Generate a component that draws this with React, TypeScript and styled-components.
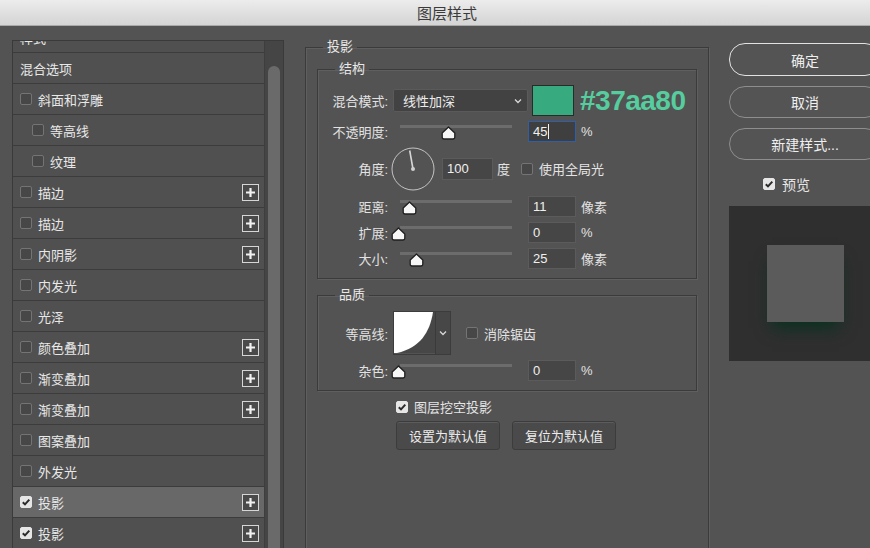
import React from "react"
import styled, { createGlobalStyle } from "styled-components"

const GlobalStyle = createGlobalStyle`
  html, body {
    margin: 0;
    padding: 0;
    background: #535353;
  }
  body {
    font-family: "Liberation Sans", "Noto Sans CJK SC", sans-serif;
    color: #e4e4e4;
  }
`

type StyleItem = {
  label: string
  check?: boolean
  checked?: boolean
  indent?: boolean
  plus?: boolean
  active?: boolean
  clipped?: boolean
}

const styleItems: StyleItem[] = [
  { label: "样式", clipped: true },
  { label: "混合选项" },
  { label: "斜面和浮雕", check: true },
  { label: "等高线", check: true, indent: true },
  { label: "纹理", check: true, indent: true },
  { label: "描边", check: true, plus: true },
  { label: "描边", check: true, plus: true },
  { label: "内阴影", check: true, plus: true },
  { label: "内发光", check: true },
  { label: "光泽", check: true },
  { label: "颜色叠加", check: true, plus: true },
  { label: "渐变叠加", check: true, plus: true },
  { label: "渐变叠加", check: true, plus: true },
  { label: "图案叠加", check: true },
  { label: "外发光", check: true },
  { label: "投影", check: true, checked: true, plus: true, active: true },
  { label: "投影", check: true, checked: true, plus: true },
]

const Check = ({ checked }: { checked?: boolean }) => (
  <CheckBox $checked={checked}>
    {checked && (
      <svg width="10" height="10" viewBox="0 0 10 10">
        <path d="M1.8 5.2 L4 7.4 L8.3 2.6" fill="none" stroke="#2b2b2b" strokeWidth="2" />
      </svg>
    )}
  </CheckBox>
)

const PlusIcon = () => (
  <PlusBox>
    <svg width="11" height="11" viewBox="0 0 11 11">
      <path d="M5.5 1 V10 M1 5.5 H10" stroke="#f0f0f0" strokeWidth="2.2" />
    </svg>
  </PlusBox>
)

const Chevron = () => (
  <svg width="8" height="6" viewBox="0 0 8 6">
    <path d="M1 1.5 L4 4.5 L7 1.5" fill="none" stroke="#d8d8d8" strokeWidth="1.3" />
  </svg>
)

const Slider = ({ value }: { value: number }) => (
  <SliderBox>
    <Track />
    <Thumb style={{ left: `${value * 112 - 9}px` }}>
      <svg width="15" height="14" viewBox="0 0 15 14">
        <path
          d="M7.5 1 L13.8 7 L13.8 11.3 Q13.8 13 12 13 L3 13 Q1.2 13 1.2 11.3 L1.2 7 Z"
          fill="#f7f7f7"
          stroke="#1f1f1f"
          strokeWidth="1.3"
          strokeLinejoin="round"
        />
      </svg>
    </Thumb>
  </SliderBox>
)

const Dial = () => (
  <DialBox>
    <svg width="44" height="44" viewBox="0 0 44 44">
      <circle cx="22" cy="22" r="21" fill="none" stroke="#c4c4c4" strokeWidth="1" />
      <line x1="22" y1="22" x2="18.7" y2="3.5" stroke="#d6d6d6" strokeWidth="1.6" />
      <circle cx="22" cy="22" r="2" fill="#d0d0d0" />
    </svg>
  </DialBox>
)

const App = () => {
  return (
    <Window>
      <GlobalStyle />
      <TitleBar>图层样式</TitleBar>
      <Body>
        <StylePanel>
          <StyleList>
            {styleItems.map((item, i) => (
              <StyleRow key={i} $indent={item.indent} $active={item.active} $clipped={item.clipped}>
                {item.check && <Check checked={item.checked} />}
                <span>{item.label}</span>
                {item.plus && <PlusIcon />}
              </StyleRow>
            ))}
          </StyleList>
          <ScrollTrack>
            <ScrollThumb />
          </ScrollTrack>
        </StylePanel>

        <Middle>
          <Group $outer>
            <Legend $indent={6}>投影</Legend>
            <Group>
              <Legend $indent={7}>结构</Legend>
              <GroupBody>
                <FieldRow $h={29}>
                  <Label>混合模式:</Label>
                  <Select>
                    <span>线性加深</span>
                    <Chevron />
                  </Select>
                  <Swatch />
                  <HexText>#37aa80</HexText>
                </FieldRow>
                <FieldRow $h={20}>
                  <Label>不透明度:</Label>
                  <Slider value={0.45} />
                  <NumInput $focus>
                    45
                    <Caret />
                  </NumInput>
                  <Unit>%</Unit>
                </FieldRow>
                <FieldRow $h={43}>
                  <Label>角度:</Label>
                  <Dial />
                  <NumInput $wide>100</NumInput>
                  <Unit $gap={4}>度</Unit>
                  <CheckLabel $gap={11}>
                    <Check />
                    使用全局光
                  </CheckLabel>
                </FieldRow>
                <FieldRow $h={20}>
                  <Label>距离:</Label>
                  <Slider value={0.1} />
                  <NumInput>11</NumInput>
                  <Unit>像素</Unit>
                </FieldRow>
                <FieldRow $h={20}>
                  <Label>扩展:</Label>
                  <Slider value={0} />
                  <NumInput>0</NumInput>
                  <Unit>%</Unit>
                </FieldRow>
                <FieldRow $h={20}>
                  <Label>大小:</Label>
                  <Slider value={0.16} />
                  <NumInput>25</NumInput>
                  <Unit>像素</Unit>
                </FieldRow>
              </GroupBody>
            </Group>

            <Group $spaced>
              <Legend $indent={7}>品质</Legend>
              <GroupBody $top={8}>
                <FieldRow $h={42}>
                  <Label>等高线:</Label>
                  <ContourPicker>
                    <ContourPreview>
                      <svg width="41" height="41" viewBox="0 0 41 41">
                        <rect width="41" height="41" fill="#474747" />
                        <path d="M0 41 L0 0 L39 0 C36 20 26 36 3 41 Z" fill="#ffffff" />
                      </svg>
                    </ContourPreview>
                    <ContourArrow>
                      <Chevron />
                    </ContourArrow>
                  </ContourPicker>
                  <CheckLabel $gap={15}>
                    <Check />
                    消除锯齿
                  </CheckLabel>
                </FieldRow>
                <FieldRow $h={20}>
                  <Label>杂色:</Label>
                  <Slider value={0} />
                  <NumInput>0</NumInput>
                  <Unit>%</Unit>
                </FieldRow>
              </GroupBody>
            </Group>

            <Actions>
              <CheckLabel $gap={0}>
                <Check checked />
                图层挖空投影
              </CheckLabel>
              <ButtonRow>
                <FlatButton>设置为默认值</FlatButton>
                <FlatButton>复位为默认值</FlatButton>
              </ButtonRow>
            </Actions>
          </Group>
        </Middle>

        <Side>
          <PillButton $primary>确定</PillButton>
          <PillButton>取消</PillButton>
          <PillButton>新建样式...</PillButton>
          <PreviewToggle>
            <Check checked />
            预览
          </PreviewToggle>
          <PreviewBox>
            <PreviewSquare />
          </PreviewBox>
        </Side>
      </Body>
    </Window>
  )
}

const Window = styled.div`
  width: 870px;
  height: 548px;
  overflow: hidden;
  display: flex;
  flex-direction: column;
  background: #535353;
`

const TitleBar = styled.div`
  flex: none;
  height: 26px;
  box-sizing: border-box;
  display: flex;
  align-items: center;
  justify-content: center;
  padding-left: 24px;
  background: linear-gradient(#ececec, #d4d4d4);
  border-bottom: 1px solid #a9a9a9;
  color: #3b3b3b;
  font-size: 15px;
`

const Body = styled.div`
  flex: 1;
  min-height: 0;
  display: flex;
  align-items: flex-start;
  padding: 14px 0 0 12px;
  overflow: hidden;
`

const StylePanel = styled.div`
  flex: none;
  width: 272px;
  height: 520px;
  box-sizing: border-box;
  display: flex;
  border: 1px solid #3a3a3a;
  border-bottom: none;
  background: #4f4f4f;
`

const StyleList = styled.div`
  flex: 1;
  overflow: hidden;
  display: flex;
  flex-direction: column;
`

const StyleRow = styled.div<{ $indent?: boolean; $active?: boolean; $clipped?: boolean }>`
  flex: none;
  height: 31px;
  box-sizing: border-box;
  display: flex;
  align-items: center;
  gap: 6px;
  padding: 0 5px 0 ${(p) => (p.$indent ? 19 : 7)}px;
  margin-top: ${(p) => (p.$clipped ? "-19px" : "0")};
  border-bottom: 1px solid #3c3c3c;
  background: ${(p) => (p.$active ? "#686868" : "#505050")};
  font-size: 13px;
  color: #e8e8e8;
`

const CheckBox = styled.span<{ $checked?: boolean }>`
  flex: none;
  width: 12px;
  height: 12px;
  box-sizing: border-box;
  border-radius: 2px;
  display: inline-flex;
  align-items: center;
  justify-content: center;
  border: 1px solid ${(p) => (p.$checked ? "#e6e6e6" : "#747474")};
  background: ${(p) => (p.$checked ? "#e6e6e6" : "#474747")};
`

const PlusBox = styled.span`
  flex: none;
  margin-left: auto;
  width: 17px;
  height: 17px;
  box-sizing: border-box;
  border: 1.5px solid #d6d6d6;
  display: flex;
  align-items: center;
  justify-content: center;
  background: #4a4a4a;
`

const ScrollTrack = styled.div`
  flex: none;
  width: 18px;
  display: flex;
  justify-content: center;
  padding-top: 25px;
  background: #454545;
  border-left: 1px solid #3e3e3e;
`

const ScrollThumb = styled.div`
  width: 12px;
  border-radius: 6px;
  background: #6a6a6a;
`

const Middle = styled.div`
  flex: none;
  width: 404px;
  margin: -2px 0 0 21px;
`

const Group = styled.fieldset<{ $outer?: boolean; $spaced?: boolean }>`
  margin: ${(p) => (p.$spaced ? "7px 0 0" : p.$outer ? "0" : "4px 0 0")};
  padding: 0 ${(p) => (p.$outer ? 11 : 10)}px;
  min-width: 0;
  min-height: ${(p) => (p.$outer ? "530px" : "0")};
  border: 1px solid #3b3b3b;
  box-shadow: inset 1px 1px 0 #5f5f5f, 1px 1px 0 #5f5f5f;
`

const Legend = styled.legend<{ $indent: number }>`
  margin-left: ${(p) => p.$indent}px;
  padding: 0 4px;
  font-size: 13px;
  line-height: 18px;
  color: #e8e8e8;
`

const GroupBody = styled.div<{ $top?: number }>`
  display: flex;
  flex-direction: column;
  gap: 6px;
  padding: ${(p) => p.$top ?? 8}px 0 10px;
`

const FieldRow = styled.div<{ $h: number }>`
  height: ${(p) => p.$h}px;
  display: flex;
  align-items: center;
  font-size: 13px;
  color: #e2e2e2;
`

const Label = styled.span`
  flex: none;
  width: 60px;
  text-align: right;
`

const Select = styled.div`
  flex: none;
  margin-left: 5px;
  width: 135px;
  height: 23px;
  box-sizing: border-box;
  display: flex;
  align-items: center;
  justify-content: space-between;
  padding: 0 5px 0 9px;
  background: #424242;
  border: 1px solid #5a5a5a;
  border-radius: 2px;
  color: #ececec;
`

const Swatch = styled.div`
  flex: none;
  margin-left: 4px;
  width: 42px;
  height: 31px;
  box-sizing: border-box;
  background: #37aa80;
  border: 1px solid #2a2a2a;
`

const HexText = styled.span`
  margin-left: 6px;
  font-family: "Liberation Sans", sans-serif;
  font-weight: bold;
  font-size: 28px;
  letter-spacing: -0.5px;
  color: #56cd9e;
`

const SliderBox = styled.div`
  flex: none;
  position: relative;
  margin-left: 12px;
  width: 112px;
  height: 20px;
`

const Track = styled.div`
  position: absolute;
  left: 0;
  right: 0;
  top: 4px;
  height: 3px;
  background: #6c6c6c;
`

const Thumb = styled.div`
  position: absolute;
  top: 5px;
  width: 15px;
  height: 14px;
  line-height: 0;
`

const NumInput = styled.div<{ $focus?: boolean; $wide?: boolean }>`
  flex: none;
  margin-left: ${(p) => (p.$wide ? 7 : 16)}px;
  width: ${(p) => (p.$wide ? 51 : 48)}px;
  height: ${(p) => (p.$wide ? 22 : 21)}px;
  box-sizing: border-box;
  display: flex;
  align-items: center;
  padding-left: 4px;
  background: ${(p) => (p.$focus ? "#3f3f3f" : "#464646")};
  border: 1px solid ${(p) => (p.$focus ? "#2f5fa8" : "#5b5b5b")};
  color: #f0f0f0;
  font-size: 13px;
`

const Caret = styled.span`
  width: 1px;
  height: 15px;
  margin-left: 1px;
  background: #f0f0f0;
`

const Unit = styled.span<{ $gap?: number }>`
  margin-left: ${(p) => p.$gap ?? 5}px;
`

const CheckLabel = styled.span<{ $gap: number }>`
  display: flex;
  align-items: center;
  gap: 6px;
  margin-left: ${(p) => p.$gap}px;
  font-size: 13px;
  color: #e4e4e4;
`

const DialBox = styled.div`
  flex: none;
  margin-left: 3px;
  width: 44px;
  height: 44px;
  line-height: 0;
`

const ContourPicker = styled.div`
  flex: none;
  margin-left: 5px;
  display: flex;
  height: 42px;
  border: 1px solid #3c3c3c;
`

const ContourPreview = styled.div`
  width: 41px;
  height: 41px;
  line-height: 0;
`

const ContourArrow = styled.div`
  width: 14px;
  display: flex;
  align-items: center;
  justify-content: center;
  background: #474747;
  border-left: 1px solid #3a3a3a;
`

const Actions = styled.div`
  display: flex;
  flex-direction: column;
  gap: 5px;
  padding: 6px 0 0 79px;
`

const ButtonRow = styled.div`
  display: flex;
  gap: 12px;
`

const FlatButton = styled.div`
  width: 104px;
  height: 29px;
  box-sizing: border-box;
  display: flex;
  align-items: center;
  justify-content: center;
  background: #4a4a4a;
  border: 1px solid #3c3c3c;
  border-radius: 3px;
  box-shadow: inset 0 1px 0 #5c5c5c;
  font-size: 13px;
  color: #ececec;
`

const Side = styled.div`
  flex: none;
  width: 152px;
  margin: 3px 0 0 20px;
  display: flex;
  flex-direction: column;
  gap: 10px;
`

const PillButton = styled.div<{ $primary?: boolean }>`
  height: ${(p) => (p.$primary ? 33 : 32)}px;
  box-sizing: border-box;
  display: flex;
  align-items: center;
  justify-content: center;
  border-radius: 16px;
  border: ${(p) => (p.$primary ? "1.5px solid #e2e2e2" : "1px solid #8e8e8e")};
  background: #545454;
  font-size: 14px;
  color: #efefef;
`

const PreviewToggle = styled.div`
  display: flex;
  align-items: center;
  gap: 7px;
  margin-top: 4px;
  padding-left: 34px;
  font-size: 14px;
  color: #e6e6e6;
`

const PreviewBox = styled.div`
  margin-top: 2px;
  height: 155px;
  display: flex;
  align-items: center;
  justify-content: center;
  background: #2f2f2f;
`

const PreviewSquare = styled.div`
  width: 77px;
  height: 77px;
  background: #5b5b5b;
  box-shadow: 0 11px 16px -5px rgba(6, 48, 32, 0.95);
`

export default App
